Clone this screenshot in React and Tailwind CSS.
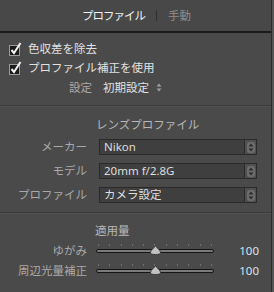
import React from "react";

const font = {
  fontFamily: '"Noto Sans", "Noto Sans CJK JP", sans-serif',
};

function Check() {
  return (
    <svg width="16" height="16" viewBox="0 0 16 16" className="shrink-0">
      <rect x="1.5" y="4.5" width="10" height="10" fill="#1b1b1b" stroke="#9a9a9a" />
      <path d="M3.5 9 L6 12 L12.5 2" fill="none" stroke="#f2f2f2" strokeWidth="2" />
    </svg>
  );
}

function UpDown({ color = "#a0a0a0" }) {
  return (
    <svg width="6" height="9" viewBox="0 0 6 9">
      <path d="M0.5 3.5 L3 0.5 L5.5 3.5 Z" fill={color} />
      <path d="M0.5 5.5 L3 8.5 L5.5 5.5 Z" fill={color} />
    </svg>
  );
}

function Select({ label, value }) {
  return (
    <div className="flex items-center h-[16px]">
      <div className="w-[87px] text-right text-[#a9a9a9] text-[11.5px] leading-none">{label}</div>
      <div className="ml-[12px] w-[158px] h-[16px] flex border border-[#2a2a2a] bg-[#3f3f3f]">
        <div className="flex-1 pl-[4px] text-[#dedede] text-[11.5px] leading-[14px] truncate">{value}</div>
        <div className="w-[12px] border-l border-[#2a2a2a] bg-[#505050] flex items-center justify-center">
          <div className="w-[8px] h-[11px] rounded-[3px] bg-[#6c6c6c] flex items-center justify-center">
            <UpDown color="#2c2c2c" />
          </div>
        </div>
      </div>
    </div>
  );
}

function Slider({ label, value }) {
  const ticks = Array.from({ length: 11 });
  return (
    <div className="flex items-center h-[20px]">
      <div className="w-[87px] text-right text-[#a9a9a9] text-[11.5px] leading-none">{label}</div>
      <div className="ml-[9px] w-[118px] h-[20px] relative">
        <div className="absolute left-[2px] right-[2px] top-[3px] flex justify-between">
          {ticks.map((_, i) => (
            <div key={i} className="w-px h-[2px] bg-[#6e6e6e]" />
          ))}
        </div>
        <div className="absolute left-0 right-0 top-[8px] h-[4px] rounded-full bg-[#7a7a7a] border border-[#151515]" />
        <svg width="11" height="10" viewBox="0 0 11 10" className="absolute left-[54px] top-[4px]">
          <path d="M5.5 0.5 C6.5 3 10.5 5 10.5 7.5 C10.5 9 9 9.5 5.5 9.5 C2 9.5 0.5 9 0.5 7.5 C0.5 5 4.5 3 5.5 0.5 Z" fill="#c2c2c2" stroke="#2a2a2a" strokeWidth="0.8" />
        </svg>
      </div>
      <div className="w-[45px] text-right text-[#d6e2ee] text-[11.5px] leading-none">{value}</div>
    </div>
  );
}

function Divider() {
  return (
    <div className="w-full">
      <div className="h-px bg-[#3a3a3a]" />
      <div className="h-px bg-[#525252]" />
    </div>
  );
}

export default function App() {
  return (
    <div className="w-[274px] h-[292px] bg-[#565656] overflow-hidden" style={font}>
      <div className="w-[272px] h-full bg-[#4a4a4a] border-r border-[#2c2c2c]">
        <div className="h-[33px] bg-[#484848] border-b-2 border-[#1a1a1a] flex items-center pl-[82px]">
          <span className="text-[#f2f2f2] text-[11.5px] leading-none tracking-[-1px]">プロファイル</span>
          <span className="ml-[11px] w-px h-[11px] bg-[#2e2e2e]" />
          <span className="ml-[11px] text-[#8f8f8f] text-[11.5px] leading-none">手動</span>
        </div>

        <div className="pt-[6px] pl-[8px]">
          <div className="flex items-center h-[19px] gap-[4px]">
            <Check />
            <span className="text-[#e2e2e2] text-[11.5px] leading-none">色収差を除去</span>
          </div>
          <div className="flex items-center h-[19px] gap-[4px]">
            <Check />
            <span className="text-[#e2e2e2] text-[11.5px] leading-none">プロファイル補正を使用</span>
          </div>
        </div>

        <div className="flex items-center h-[21px] pl-[69px]">
          <span className="text-[#a9a9a9] text-[11.5px] leading-none">設定</span>
          <span className="ml-[11px] text-[#e2e2e2] text-[11.5px] leading-none">初期設定</span>
          <span className="ml-[7px] flex items-center"><UpDown /></span>
        </div>

        <div className="mt-[7px]">
          <Divider />
        </div>

        <div className="h-[17px] mt-[9px] pl-[96px] flex items-center text-[#b8b8b8] text-[11.5px] leading-none">
          レンズプロファイル
        </div>

        <div className="mt-[6px] flex flex-col gap-[8px]">
          <Select label="メーカー" value="Nikon" />
          <Select label="モデル" value="20mm f/2.8G" />
          <Select label="プロファイル" value="カメラ設定" />
        </div>

        <div className="mt-[9px]">
          <Divider />
        </div>

        <div className="h-[17px] mt-[8px] pl-[95px] flex items-center text-[#b8b8b8] text-[11.5px] leading-none">
          適用量
        </div>

        <div className="mt-[2px]">
          <Slider label="ゆがみ" value="100" />
          <Slider label="周辺光量補正" value="100" />
        </div>
      </div>
    </div>
  );
}
